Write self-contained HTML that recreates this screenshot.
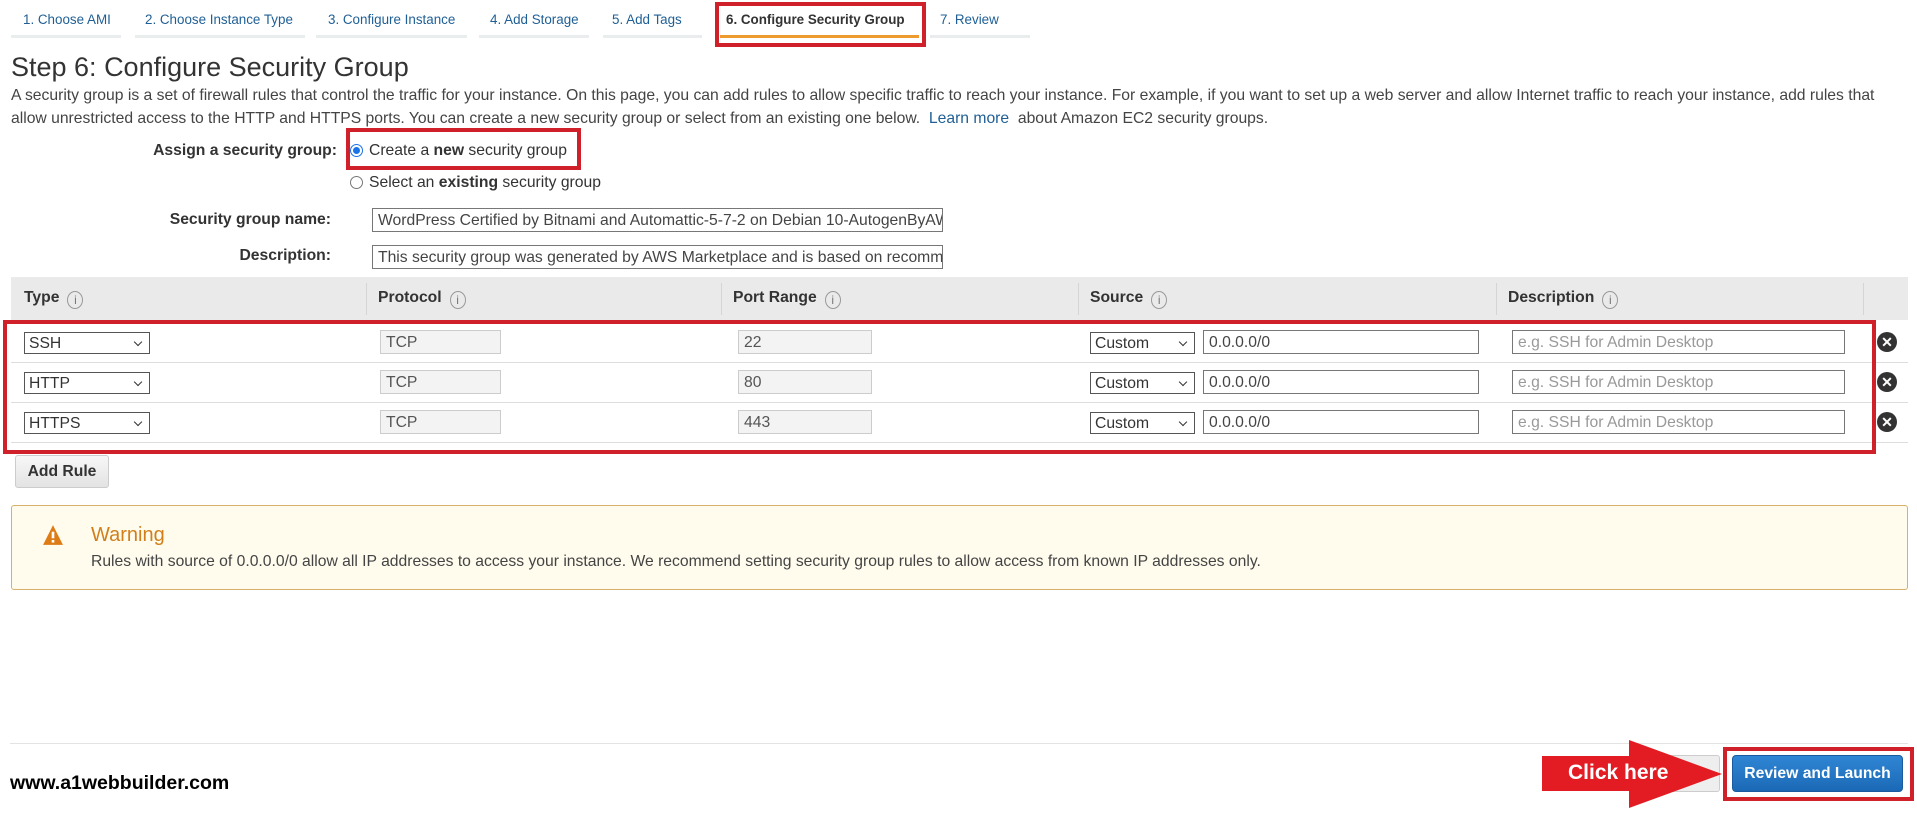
<!DOCTYPE html>
<html><head><meta charset="utf-8"><style>
*{box-sizing:border-box;margin:0;padding:0}
body{width:1917px;height:816px;background:#fff;font-family:"Liberation Sans",Arial,sans-serif;color:#444;position:relative;overflow:hidden}
.a{position:absolute;white-space:nowrap}
.tab{position:absolute;top:12px;font-size:13.4px;color:#1f5f95}
.ul{position:absolute;top:35px;height:3px;background:#eaeded}
.red{position:absolute;border:4px solid #d0202a}
.lab{position:absolute;font-size:15.7px;font-weight:bold;color:#333;text-align:right}
.inp{position:absolute;border:1px solid #777;background:#fff;font-size:15.7px;color:#444;padding:3px 5px;height:24px;line-height:17px;white-space:nowrap;overflow:hidden}
.ro{position:absolute;border:1px solid #ccc;background:#f3f3f3;font-size:15.7px;color:#555;padding:3px 5px;height:24px;line-height:17px}
.sel{position:absolute;border:1px solid #555;background:#fff;font-size:15.7px;color:#333;padding:2px 4px;height:22px;line-height:17px}
.sel:after{content:"";position:absolute;right:8px;top:6px;width:5px;height:5px;border-right:1.5px solid #333;border-bottom:1.5px solid #333;transform:rotate(45deg)}
.th{position:absolute;top:289px;font-size:15.7px;font-weight:bold;color:#333}
.info{display:inline-block;width:16px;height:18px;border:1px solid #999;border-radius:50%;font-size:12px;font-weight:normal;text-align:center;line-height:16px;color:#777;margin-left:8px;vertical-align:-2px}
.sep{position:absolute;top:283px;width:1px;height:32px;background:#d5d5d5}
.rl{position:absolute;left:11px;width:1897px;height:1px;background:#ddd}
.x{position:absolute;left:1877px;width:20px;height:20px;border-radius:50%;background:#333;color:#fff;font-size:14px;font-weight:bold;text-align:center;line-height:20px}
</style></head><body>
<div class="tab" style="left:23px">1. Choose AMI</div>
<div class="tab" style="left:145px">2. Choose Instance Type</div>
<div class="tab" style="left:328px">3. Configure Instance</div>
<div class="tab" style="left:490px">4. Add Storage</div>
<div class="tab" style="left:612px">5. Add Tags</div>
<div class="tab" style="left:726px;color:#333;font-weight:bold">6. Configure Security Group</div>
<div class="tab" style="left:940px">7. Review</div>
<div class="ul" style="left:11px;width:110px"></div>
<div class="ul" style="left:135px;width:170px"></div>
<div class="ul" style="left:316px;width:151px"></div>
<div class="ul" style="left:479px;width:110px"></div>
<div class="ul" style="left:603px;width:99px"></div>
<div class="ul" style="left:720px;width:199px;background:#ec9b2c"></div>
<div class="ul" style="left:930px;width:100px"></div>
<div class="red" style="left:715px;top:2px;width:211px;height:45px"></div>

<div class="a" style="left:11px;top:52px;font-size:27px;color:#333">Step 6: Configure Security Group</div>
<div class="a" style="left:11px;top:84px;font-size:15.7px;line-height:23px;color:#444;white-space:normal;width:1900px">A security group is a set of firewall rules that control the traffic for your instance. On this page, you can add rules to allow specific traffic to reach your instance. For example, if you want to set up a web server and allow Internet traffic to reach your instance, add rules that allow unrestricted access to the HTTP and HTTPS ports. You can create a new security group or select from an existing one below. <span style="color:#1f5f95">&nbsp;Learn more&nbsp;</span> about Amazon EC2 security groups.</div>

<div class="lab" style="left:100px;width:237px;top:142px">Assign a security group:</div>
<div class="a" style="left:350px;top:144px;width:13px;height:13px;border-radius:50%;border:1px solid #1a73e8;background:#fff"><div style="margin:2px;width:7px;height:7px;border-radius:50%;background:#1a73e8"></div></div>
<div class="a" style="left:369px;top:142px;font-size:15.7px;color:#333">Create a <b>new</b> security group</div>
<div class="red" style="left:346px;top:128px;width:235px;height:42px"></div>
<div class="a" style="left:350px;top:176px;width:13px;height:13px;border-radius:50%;border:1px solid #777"></div>
<div class="a" style="left:369px;top:174px;font-size:15.7px;color:#333">Select an <b>existing</b> security group</div>

<div class="lab" style="left:100px;width:231px;top:211px">Security group name:</div>
<div class="inp" style="left:372px;top:208px;width:571px">WordPress Certified by Bitnami and Automattic-5-7-2 on Debian 10-AutogenByAWSMP</div>
<div class="lab" style="left:100px;width:231px;top:247px">Description:</div>
<div class="inp" style="left:372px;top:245px;width:571px">This security group was generated by AWS Marketplace and is based on recommended settings</div>

<div class="a" style="left:11px;top:277px;width:1897px;height:43px;background:#eaeaea"></div>
<div class="th" style="left:24px">Type<span class="info">i</span></div>
<div class="th" style="left:378px">Protocol<span class="info">i</span></div>
<div class="th" style="left:733px">Port Range<span class="info">i</span></div>
<div class="th" style="left:1090px">Source<span class="info">i</span></div>
<div class="th" style="left:1508px">Description<span class="info">i</span></div>
<div class="sep" style="left:366px"></div><div class="sep" style="left:721px"></div><div class="sep" style="left:1078px"></div><div class="sep" style="left:1496px"></div><div class="sep" style="left:1863px"></div>

<div class="rl" style="top:362px"></div><div class="rl" style="top:402px"></div><div class="rl" style="top:442px"></div>

<div class="sel" style="left:24px;top:332px;width:126px">SSH</div>
<div class="ro" style="left:380px;top:330px;width:121px">TCP</div>
<div class="ro" style="left:738px;top:330px;width:134px">22</div>
<div class="sel" style="left:1090px;top:332px;width:105px">Custom</div>
<div class="inp" style="left:1203px;top:330px;width:276px">0.0.0.0/0</div>
<div class="inp" style="left:1512px;top:330px;width:333px;color:#999">e.g. SSH for Admin Desktop</div>
<div class="x" style="top:332px">✕</div>

<div class="sel" style="left:24px;top:372px;width:126px">HTTP</div>
<div class="ro" style="left:380px;top:370px;width:121px">TCP</div>
<div class="ro" style="left:738px;top:370px;width:134px">80</div>
<div class="sel" style="left:1090px;top:372px;width:105px">Custom</div>
<div class="inp" style="left:1203px;top:370px;width:276px">0.0.0.0/0</div>
<div class="inp" style="left:1512px;top:370px;width:333px;color:#999">e.g. SSH for Admin Desktop</div>
<div class="x" style="top:372px">✕</div>

<div class="sel" style="left:24px;top:412px;width:126px">HTTPS</div>
<div class="ro" style="left:380px;top:410px;width:121px">TCP</div>
<div class="ro" style="left:738px;top:410px;width:134px">443</div>
<div class="sel" style="left:1090px;top:412px;width:105px">Custom</div>
<div class="inp" style="left:1203px;top:410px;width:276px">0.0.0.0/0</div>
<div class="inp" style="left:1512px;top:410px;width:333px;color:#999">e.g. SSH for Admin Desktop</div>
<div class="x" style="top:412px">✕</div>

<div class="red" style="left:3px;top:320px;width:1873px;height:134px"></div>

<div class="a" style="left:15px;top:455px;width:94px;height:33px;border:1px solid #ccc;border-radius:3px;background:linear-gradient(#f7f7f7,#e3e3e3);font-size:15.7px;font-weight:bold;color:#333;text-align:center;line-height:31px">Add Rule</div>

<div class="a" style="left:11px;top:505px;width:1897px;height:85px;border:1px solid #d9b06a;border-radius:3px;background:#fffcee"></div>
<svg class="a" style="left:42px;top:524px" width="22" height="22" viewBox="0 0 20 20"><path d="M10 1 L19 19 L1 19 Z" fill="#dd7b14"/><rect x="8.8" y="7" width="2.4" height="6" fill="#fff"/><rect x="8.8" y="14.5" width="2.4" height="2.4" fill="#fff"/></svg>
<div class="a" style="left:91px;top:524px;font-size:20px;color:#d17f1a">Warning</div>
<div class="a" style="left:91px;top:553px;font-size:15.7px;color:#444">Rules with source of 0.0.0.0/0 allow all IP addresses to access your instance. We recommend setting security group rules to allow access from known IP addresses only.</div>

<div class="a" style="left:10px;top:743px;width:1898px;height:1px;background:#e3e3e3"></div>
<div class="a" style="left:10px;top:772px;font-size:19.5px;font-weight:bold;color:#000">www.a1webbuilder.com</div>

<div class="a" style="left:1660px;top:755px;width:60px;height:37px;border:1px solid #ccc;border-radius:3px;background:#eee"></div>
<svg class="a" style="left:1540px;top:738px" width="185" height="72" viewBox="0 0 185 72"><path d="M2 18 H89 V2 L182 36 L89 70 V53 H2 Z" fill="#e31b23"/></svg>
<div class="a" style="left:1568px;top:761px;font-size:21px;font-weight:bold;color:#fff">Click here</div>

<div class="a" style="left:1732px;top:755px;width:171px;height:37px;border:1px solid #1a5a9e;border-radius:4px;background:linear-gradient(#2f86d4,#1b69b6);color:#fff;font-size:15.7px;font-weight:bold;text-align:center;line-height:35px">Review and Launch</div>
<div class="red" style="left:1723px;top:747px;width:191px;height:54px"></div>
</body></html>
